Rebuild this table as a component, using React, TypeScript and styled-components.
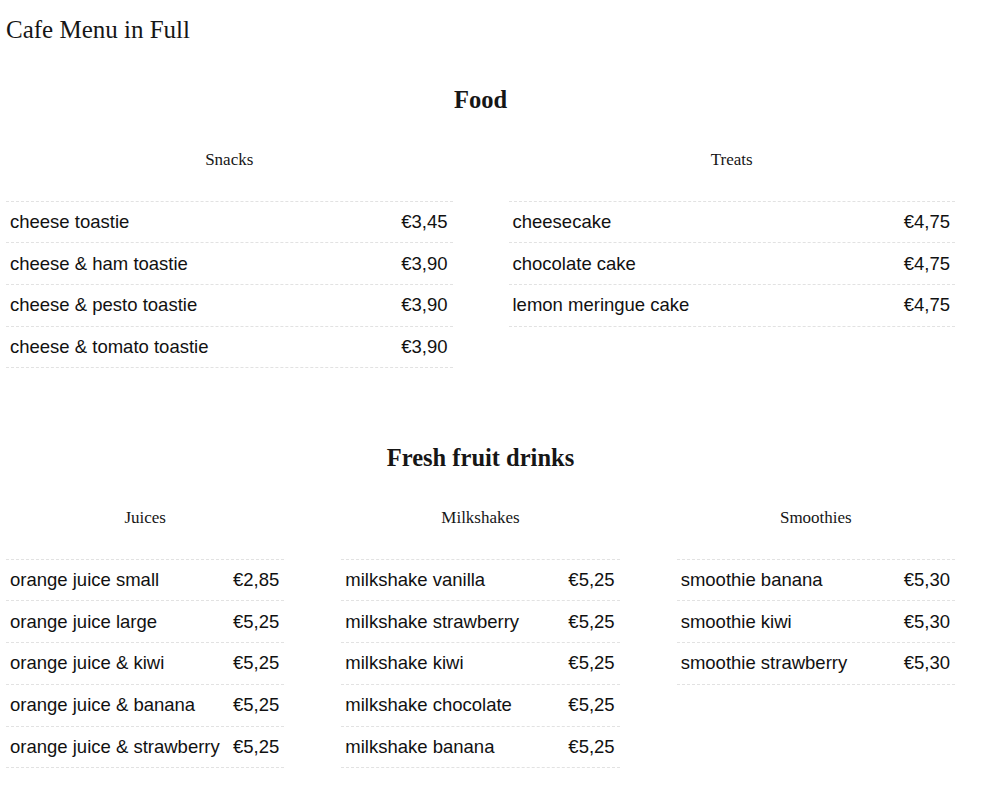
import React from "react";
import styled, { createGlobalStyle } from "styled-components";

const Global = createGlobalStyle`
  html, body { margin: 0; padding: 0; background: #fff; }
  body { color: #111; font-family: "Liberation Serif", serif; }
`;

const Page = styled.div`
  width: 949px;
  padding: 17px 0 40px 6px;
`;

const Title = styled.h1`
  margin: 0;
  font-family: "Liberation Serif", serif;
  font-weight: normal;
  font-size: 25px;
  line-height: 26px;
  color: #161616;
`;

const Section = styled.section<{ $top: number }>`
  margin-top: ${(p) => p.$top}px;
`;

const SectionTitle = styled.h2`
  margin: 0;
  text-align: center;
  font-family: "Liberation Serif", serif;
  font-weight: bold;
  font-size: 24.5px;
  line-height: 28px;
  color: #161616;
`;

const Columns = styled.div<{ $cols: number }>`
  display: grid;
  grid-template-columns: repeat(${(p) => p.$cols}, 1fr);
  column-gap: ${(p) => (p.$cols === 2 ? 56 : 57)}px;
  margin-top: 36px;
  align-items: start;
`;

const Group = styled.div``;

const GroupTitle = styled.h3`
  margin: 0 0 30.5px;
  text-align: center;
  font-family: "Liberation Serif", serif;
  font-weight: normal;
  font-size: 17px;
  line-height: 20px;
  color: #161616;
`;

const List = styled.ul`
  list-style: none;
  margin: 0;
  padding: 0;
  border-top: 1px dashed #e2e2e2;
`;

const Row = styled.li`
  display: flex;
  justify-content: space-between;
  align-items: center;
  height: 40.7px;
  padding: 0 5px 0 4px;
  border-bottom: 1px dashed #e2e2e2;
  font-family: "Liberation Sans", Arial, sans-serif;
  font-size: 18.5px;
  color: #111;
`;

type Item = [string, string];
type GroupData = { name: string; items: Item[] };

const food: GroupData[] = [
  {
    name: "Snacks",
    items: [
      ["cheese toastie", "€3,45"],
      ["cheese & ham toastie", "€3,90"],
      ["cheese & pesto toastie", "€3,90"],
      ["cheese & tomato toastie", "€3,90"],
    ],
  },
  {
    name: "Treats",
    items: [
      ["cheesecake", "€4,75"],
      ["chocolate cake", "€4,75"],
      ["lemon meringue cake", "€4,75"],
    ],
  },
];

const drinks: GroupData[] = [
  {
    name: "Juices",
    items: [
      ["orange juice small", "€2,85"],
      ["orange juice large", "€5,25"],
      ["orange juice & kiwi", "€5,25"],
      ["orange juice & banana", "€5,25"],
      ["orange juice & strawberry", "€5,25"],
    ],
  },
  {
    name: "Milkshakes",
    items: [
      ["milkshake vanilla", "€5,25"],
      ["milkshake strawberry", "€5,25"],
      ["milkshake kiwi", "€5,25"],
      ["milkshake chocolate", "€5,25"],
      ["milkshake banana", "€5,25"],
    ],
  },
  {
    name: "Smoothies",
    items: [
      ["smoothie banana", "€5,30"],
      ["smoothie kiwi", "€5,30"],
      ["smoothie strawberry", "€5,30"],
    ],
  },
];

const MenuSection = ({ title, groups, top }: { title: string; groups: GroupData[]; top: number }) => (
  <Section $top={top}>
    <SectionTitle>{title}</SectionTitle>
    <Columns $cols={groups.length}>
      {groups.map((g) => (
        <Group key={g.name}>
          <GroupTitle>{g.name}</GroupTitle>
          <List>
            {g.items.map(([n, p]) => (
              <Row key={n}>
                <span>{n}</span>
                <span>{p}</span>
              </Row>
            ))}
          </List>
        </Group>
      ))}
    </Columns>
  </Section>
);

export default function App() {
  return (
    <>
      <Global />
      <Page>
        <Title>Cafe Menu in Full</Title>
        <MenuSection title="Food" groups={food} top={43} />
        <MenuSection title="Fresh fruit drinks" groups={drinks} top={76} />
      </Page>
    </>
  );
}
